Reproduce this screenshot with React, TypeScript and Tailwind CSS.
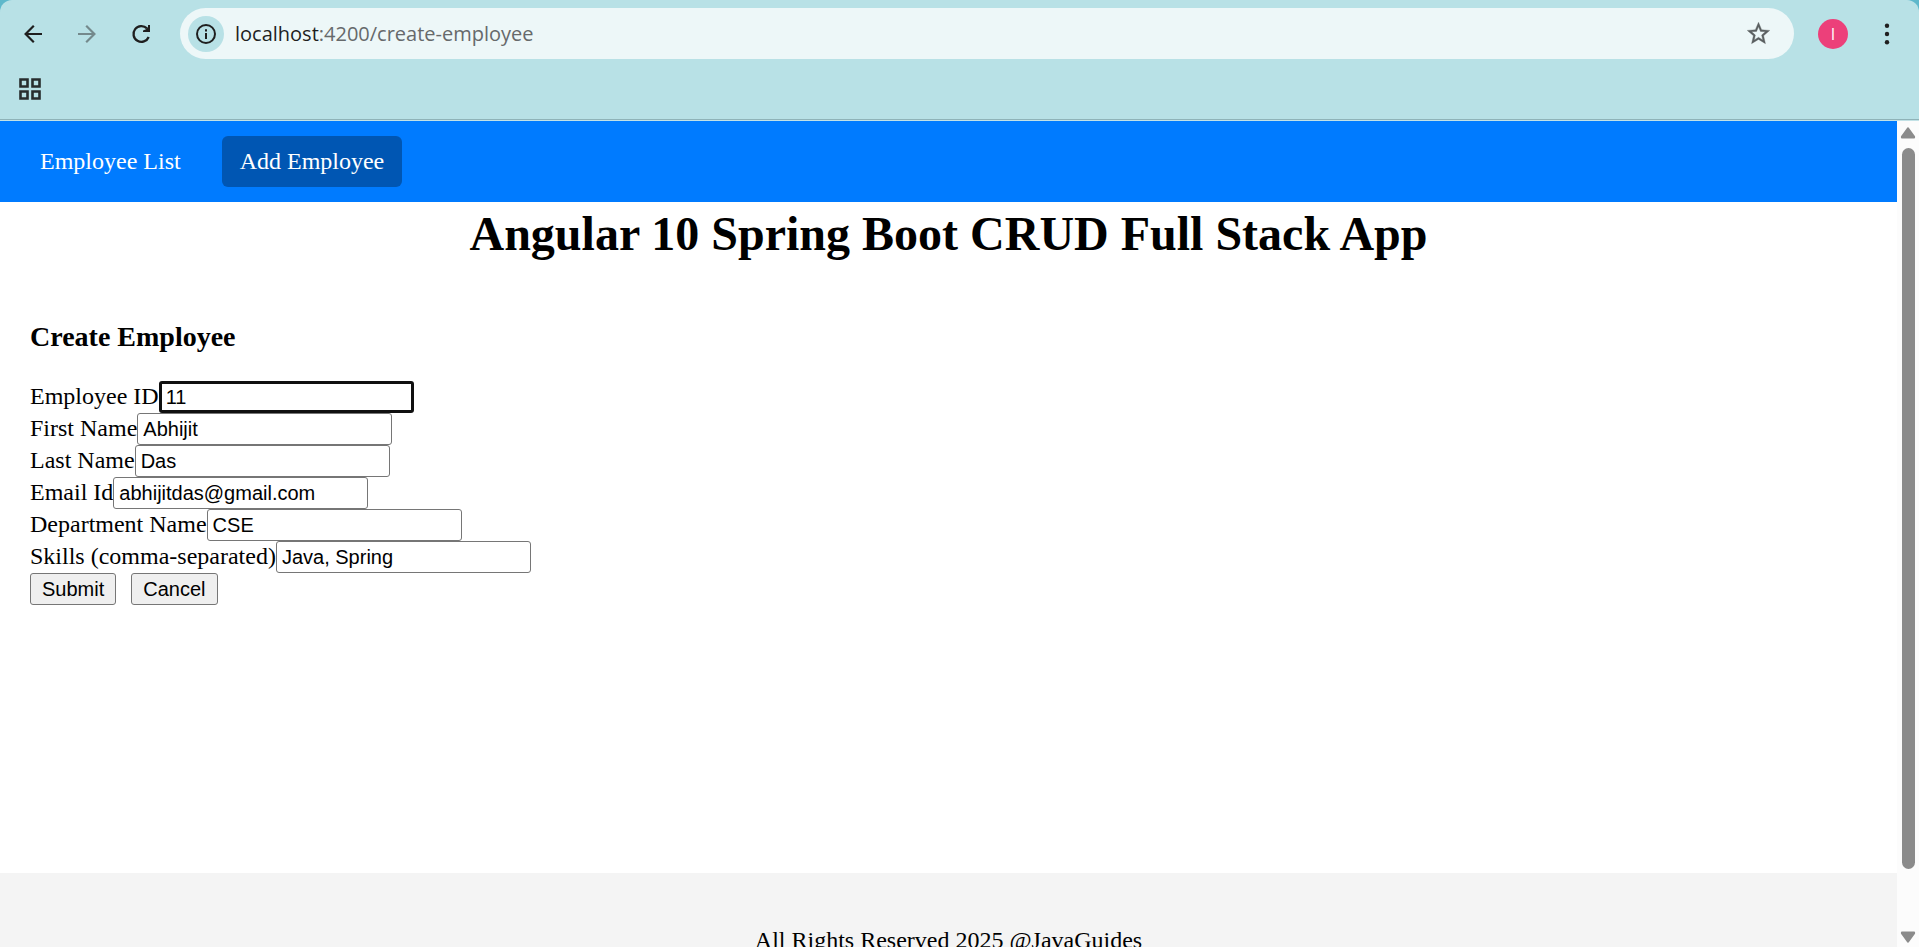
import { useState, type InputHTMLAttributes } from "react";

const fields = [
  { id: "employeeId", label: "Employee ID", value: "11" },
  { id: "firstName", label: "First Name", value: "Abhijit" },
  { id: "lastName", label: "Last Name", value: "Das" },
  { id: "emailId", label: "Email Id", value: "abhijitdas@gmail.com" },
  { id: "departmentName", label: "Department Name", value: "CSE" },
  { id: "skills", label: "Skills (comma-separated)", value: "Java, Spring" },
];

function Field({ id, label, value, ...rest }: { id: string; label: string; value: string } & InputHTMLAttributes<HTMLInputElement>) {
  const [text, setText] = useState(value);
  return (
    <div className="flex h-8 items-start">
      <label htmlFor={id} className="leading-[30px]">{label}</label>
      <input
        id={id}
        name={id}
        type="text"
        value={text}
        onChange={(e) => setText(e.target.value)}
        className="h-8 w-[255px] rounded-[3px] border border-[#767676] bg-white px-[5px] font-['Liberation_Sans',Arial,sans-serif] text-xl text-black caret-transparent outline-none focus:border-3 focus:border-[#101010] focus:px-1"
        {...rest}
      />
    </div>
  );
}

function Toolbar() {
  return (
    <header className="bg-[#5eb8cb] font-['Open_Sans','Noto_Sans',sans-serif]">
      <div className="h-[121px] rounded-t-xl border-b border-[#c3e2e6] bg-[#b8e1e6]">
        <div className="flex h-full flex-col border-b border-[#8fb3b8] pt-2">
          <div className="flex items-center pr-[17px] pl-[19px]">
            <button aria-label="Back" className="flex size-7 items-center justify-center">
              <svg viewBox="0 0 28 28" className="size-7" fill="none" stroke="#1f1f1f" strokeWidth="2.2">
                <path d="M23 14H6.500M14.800 5.800L6.600 14l8.200 8.200" />
              </svg>
            </button>
            <button aria-label="Forward" className="ml-[26px] flex size-7 items-center justify-center">
              <svg viewBox="0 0 28 28" className="size-7" fill="none" stroke="#74898c" strokeWidth="2.2">
                <path d="M5 14h16.500M13.200 5.800L21.400 14l-8.200 8.200" />
              </svg>
            </button>
            <button aria-label="Reload" className="ml-[26px] flex size-7 items-center justify-center">
              <svg viewBox="0 0 28 28" className="size-7" fill="none" stroke="#1f1f1f" strokeWidth="2.3">
                <path d="M21.700 17a7.900 7.900 0 1 1-1.700-8.600" />
                <path d="M23 5v7h-7v-1.500l3-1.200 2-2V5z" fill="#1f1f1f" stroke="none" />
              </svg>
            </button>
            <div className="ml-[25px] flex h-[51px] grow items-center rounded-full bg-[#edf7f8] pr-5 pl-2">
              <button aria-label="Site information" className="flex size-9 items-center justify-center rounded-full bg-[#b8e1e6]">
                <svg viewBox="0 0 24 24" className="size-6" fill="none" stroke="#1f1f1f" strokeWidth="2">
                  <circle cx="12" cy="12" r="9" />
                  <path d="M12 11v6M12 7.200v2.200" />
                </svg>
              </button>
              <p className="grow pl-[11px] text-xl text-[#66696b]">
                <span className="text-[#1f1f1f]">localhost</span>:4200/create-employee
              </p>
              <button aria-label="Bookmark this page" className="flex size-8 items-center justify-center">
                <svg viewBox="0 0 24 24" className="size-[27px]" fill="#5b5f61">
                  <path d="M22 9.240l-7.190-.620L12 2 9.190 8.630 2 9.240l5.460 4.730L5.820 21 12 17.270 18.180 21l-1.630-7.030L22 9.240zM12 15.400l-3.760 2.270 1-4.280-3.320-2.880 4.380-.380L12 6.100l1.710 4.040 4.380.380-3.320 2.880 1 4.280L12 15.400z" stroke="#5b5f61" strokeWidth=".3" />
                </svg>
              </button>
            </div>
            <button aria-label="Profile" className="ml-6 flex size-[30px] items-center justify-center rounded-full bg-[#ec407a] text-base text-white">
              I
            </button>
            <button aria-label="Menu" className="ml-6 flex h-7 w-[30px] items-center justify-center">
              <svg viewBox="0 0 30 28" className="h-7 w-[30px]" fill="#1f1f1f">
                <circle cx="15" cy="5.700" r="2.200" />
                <circle cx="15" cy="14" r="2.200" />
                <circle cx="15" cy="22.300" r="2.200" />
              </svg>
            </button>
          </div>
          <div className="flex grow items-center pl-[18px]">
            <button aria-label="Apps">
              <svg viewBox="0 0 24 24" className="size-6" fill="none" stroke="#272d2e" strokeWidth="2.600">
                <path d="M2.500 2.500h7v7h-7zM14.500 2.500h7v7h-7zM2.500 14.500h7v7h-7zM14.500 14.500h7v7h-7z" />
              </svg>
            </button>
          </div>
        </div>
      </div>
    </header>
  );
}

function ScrollRail() {
  return (
    <div aria-hidden="true" className="flex w-[22px] shrink-0 flex-col items-center bg-[#fcfcfc] pt-1.5 pb-1">
      <svg viewBox="0 0 16 12" className="h-3 w-4" fill="#8b8b8b">
        <path d="M6.800 1.200Q8-.5 9.200 1.200L15 9.300Q15.500 11.500 14 11.500H2Q.5 11.500 1 9.300Z" />
      </svg>
      <div className="mt-[9px] mb-[62px] w-[13px] grow rounded-full bg-[#8b8b8b]" />
      <svg viewBox="0 0 16 12" className="h-3 w-4" fill="#8b8b8b">
        <path d="M6.800 10.800Q8 12.500 9.200 10.800L15 2.700Q15.500.5 14 .5H2Q.5.500 1 2.700Z" />
      </svg>
    </div>
  );
}

export default function App() {
  return (
    <div className="flex h-screen flex-col overflow-hidden bg-white">
      <Toolbar />
      <div className="flex min-h-0 grow">
        <div className="flex min-w-0 grow flex-col overflow-hidden font-['Liberation_Serif','Times_New_Roman',serif] text-2xl leading-[27px] text-black">
          <nav className="flex shrink-0 gap-[23px] bg-[#007bff] px-[22px] py-[15px] text-white">
            <a href="#employees" className="rounded-md px-[18px] py-3">Employee List</a>
            <a href="#create-employee" className="rounded-md bg-[#0056b3] px-[18px] py-3">Add Employee</a>
          </nav>
          <h1 className="shrink-0 pt-1 text-center text-5xl leading-[55px] font-bold">Angular 10 Spring Boot CRUD Full Stack App</h1>
          <main className="grow px-[30px] pt-[60px]">
            <h3 className="text-[28px] leading-8 font-bold">Create Employee</h3>
            <form className="pt-7" onSubmit={(e) => e.preventDefault()}>
              {fields.map((f, i) => (
                <Field key={f.id} {...f} autoFocus={i === 0} />
              ))}
              <div className="flex gap-[15px] font-['Liberation_Sans',Arial,sans-serif] text-xl">
                <button type="submit" className="h-8 rounded-[3px] border border-[#767676] bg-[#efefef] px-[11px] leading-none">Submit</button>
                <button type="button" className="h-8 rounded-[3px] border border-[#767676] bg-[#efefef] px-[11px] leading-none">Cancel</button>
              </div>
            </form>
          </main>
          <footer className="h-[74px] shrink-0 bg-[#f4f4f4] pt-[54px] text-center whitespace-nowrap">All Rights Reserved 2025 @JavaGuides</footer>
        </div>
        <ScrollRail />
      </div>
    </div>
  );
}
